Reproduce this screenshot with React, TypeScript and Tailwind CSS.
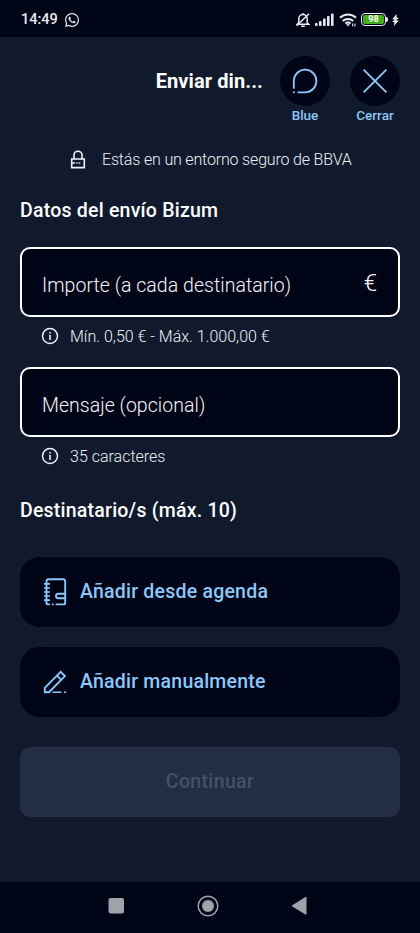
import type { ReactNode } from "react";
import { FaWhatsapp } from "react-icons/fa";

function StatusBar() {
  return (
    <div className="h-[37px] bg-[#000417] flex items-center justify-between pl-[21px] pr-[21px] pt-[2px] text-[#e8eaf0]">
      <div className="flex items-center gap-[6px]">
        <span className="w-[37px] pt-[2px] text-[14.5px] font-medium leading-none whitespace-nowrap">14:49</span>
        <FaWhatsapp className="w-[16px] h-[16px]" />
      </div>
      <div className="flex items-center">
        <svg width="14" height="16" viewBox="0 0 14 16" fill="none" stroke="currentColor" strokeWidth="1.5">
          <path d="M2.8 10.5V6.8a4.2 4.2 0 0 1 8.4 0v3.9l1.6 1.6H1.2zM7 1v1.6" />
          <path d="M5.2 14.2h3.6M.7 13.7 13 1.7" />
        </svg>
        <svg className="ml-[5px]" width="19" height="13" viewBox="0 0 19 13" fill="currentColor">
          <rect x="0" y="10" width="2.6" height="3" rx=".8" />
          <rect x="4" y="8" width="2.6" height="5" rx=".8" />
          <rect x="8" y="5.5" width="2.6" height="7.5" rx=".8" />
          <rect x="12" y="3" width="2.6" height="10" rx=".8" />
          <rect x="16" y=".5" width="2.6" height="12.5" rx=".8" />
        </svg>
        <svg className="ml-[5px]" width="19" height="14" viewBox="0 0 19 14" fill="none" stroke="currentColor" strokeWidth="2">
          <path d="M1 4.8a11.5 11.5 0 0 1 16 0M3.8 8a7.5 7.5 0 0 1 10.4 0M6.4 10.6a3.8 3.8 0 0 1 5.2 0" />
          <path d="m7 11.3 2 2.2 2-2.2z" fill="currentColor" stroke="none" />
          <path d="M13.7 10.5v3M16 10.5v3" strokeWidth="1.1" />
        </svg>
        <div className="ml-[3px] flex items-center">
          <div className="w-[25px] h-[13px] rounded-[4px] border-[1.5px] border-[#e8eaf0] p-px">
            <div className="h-full rounded-[2px] bg-[#46ad1c] flex items-center justify-center text-[9px] leading-none font-bold text-white">
              98
            </div>
          </div>
          <div className="w-[2px] h-[5px] rounded-r bg-[#e8eaf0]" />
        </div>
        <svg className="ml-[4px]" width="7" height="12" viewBox="0 0 7 12" fill="currentColor">
          <path d="M4.6 0 .3 5.2 3 5.8 0 7.8l2.4.5L1.8 12 6.7 6.8 4.1 6 7 4.1 4.6 3.5z" />
        </svg>
      </div>
    </div>
  );
}

function HeaderButton({ label, children }: { label: string; children: ReactNode }) {
  return (
    <button className="w-[50px] flex flex-col items-center text-[#8bc8fb]">
      <span className="w-[50px] h-[50px] rounded-full bg-[#000417] flex items-center justify-center">{children}</span>
      <span className="text-[13.5px] leading-[18px] font-medium">{label}</span>
    </button>
  );
}

function InfoIcon() {
  return (
    <svg width="18" height="18" viewBox="0 0 18 18" fill="none" stroke="#f0f2f7" strokeWidth="1.5">
      <circle cx="9" cy="9" r="7.5" />
      <path d="M9 7.7v5.2M9 5v1.5" strokeWidth="1.6" />
    </svg>
  );
}

function Field({ label, suffix }: { label: string; suffix?: string }) {
  return (
    <div className="h-[70px] rounded-[10px] border-2 border-white bg-[#000417] flex items-center justify-between pl-[20px] pr-[21px] pt-[8px] font-light text-[#f4f5f9]">
      <span className="text-[19.5px] leading-6 tracking-[0.04px]">{label}</span>
      {suffix && <span className="text-[24px] leading-6 -mt-[6px]">{suffix}</span>}
    </div>
  );
}

function Hint({ children }: { children: ReactNode }) {
  return (
    <div className="h-[38px] flex items-center gap-[11px] pl-[21px] text-[16px] font-light text-[#eef0f5]">
      <InfoIcon />
      <span className="pt-px">{children}</span>
    </div>
  );
}

function ActionButton({ label, icon }: { label: string; icon: ReactNode }) {
  return (
    <button className="h-[70px] w-full rounded-[20px] bg-[#000417] flex items-center gap-[12px] pl-[22px] text-[#8bc8fb]">
      {icon}
      <span className="text-[19.5px] font-medium tracking-[0.22px]">{label}</span>
    </button>
  );
}

const agendaIcon = (
  <svg width="26" height="30" viewBox="0 0 26 30" fill="none" stroke="currentColor" strokeWidth="1.9">
    <path d="M7.8 27.4H6.2a1.7 1.7 0 0 1-1.7-1.7V4a1.7 1.7 0 0 1 1.7-1.7h15.3A1.7 1.7 0 0 1 23.2 4v21.7a1.7 1.7 0 0 1-1.7 1.7h-7.8" />
    <path d="M2 6.8h6M2 11h6M2 15h6M2 19h6M2 23.2h6M9.8 27.4h1.8" strokeWidth="1.7" />
    <path d="M23 16.8h-6.8a2.2 2.2 0 0 0 0 4.4H23" />
  </svg>
);

const pencilIcon = (
  <svg width="26" height="30" viewBox="0 0 26 30" fill="none" stroke="currentColor" strokeWidth="1.9">
    <path d="M2.8 25.2v-4.4L18.7 4.9l4.2 4.2L7 25.2zM15 8.6l4.2 4.2" />
    <path d="M10.5 25.3h9M22 25.3h2" strokeWidth="1.6" />
  </svg>
);

export default function App() {
  return (
    <div className="w-[420px] h-[933px] bg-[#111a2c] flex flex-col overflow-hidden font-[Roboto,'Liberation_Sans',sans-serif]">
      <StatusBar />
      <main className="flex-1 px-5 flex flex-col">
        <header className="h-[102px] pt-[19px] flex justify-end items-start gap-[20px]">
          <h1 className="pt-[11px] -mr-[3px] text-[20px] leading-7 font-bold tracking-[0.1px] text-white">Enviar din...</h1>
          <HeaderButton label="Blue">
            <svg width="26" height="26" viewBox="0 0 26 26" fill="none" stroke="currentColor" strokeWidth="1.8">
              <path d="M1.8 20.8V13a11.3 11.3 0 1 1 11.3 11.3H5.6" />
              <path d="M.9 24.3h1.9" />
            </svg>
          </HeaderButton>
          <HeaderButton label="Cerrar">
            <svg width="26" height="26" viewBox="0 0 26 26" fill="none" stroke="currentColor" strokeWidth="1.8">
              <path d="m1.6 1.6 22.8 22.8M24.4 1.6 1.6 24.4" />
            </svg>
          </HeaderButton>
        </header>

        <div className="h-[42px] flex items-center pl-[50px] gap-[16px]">
          <svg width="16" height="20" viewBox="0 0 16 20" fill="none" stroke="#f0f2f7" strokeWidth="1.6">
            <path d="M1.7 9h12.6v8.6H1.7zM4 9V5.2a4 4 0 0 1 8 0V9" />
            <path d="M2 13h3M6.2 13h1.4M8.8 13h1.4" />
          </svg>
          <span className="text-[16px] font-light tracking-[-0.17px] text-[#eef0f5]">Estás en un entorno seguro de BBVA</span>
        </div>

        <h2 className="h-[66px] pt-[16px] text-[19.5px] leading-7 font-medium tracking-[0.22px] text-white">Datos del envío Bizum</h2>
        <Field label="Importe (a cada destinatario)" suffix="€" />
        <Hint>Mín. 0,50 € - Máx. 1.000,00 €</Hint>
        <div className="h-[12px]" />
        <Field label="Mensaje (opcional)" />
        <Hint>35 caracteres</Hint>

        <h2 className="h-[82px] pt-[22px] text-[19.5px] leading-7 font-medium tracking-[0.22px] text-white">Destinatario/s (máx. 10)</h2>
        <div className="flex flex-col gap-[20px]">
          <ActionButton label="Añadir desde agenda" icon={agendaIcon} />
          <ActionButton label="Añadir manualmente" icon={pencilIcon} />
        </div>
        <button className="mt-[30px] h-[70px] rounded-[10px] bg-[#232d43] text-[19.5px] font-medium tracking-[0.35px] text-[#465169]" disabled>
          Continuar
        </button>
      </main>

      <nav className="h-[51px] bg-[#000417] flex items-center pb-[3px] pl-[108px] text-[#a0a2aa]">
        <svg width="16" height="24" viewBox="0 0 16 24" fill="currentColor">
          <rect x=".5" y="4" width="15.5" height="15.5" rx="2" />
        </svg>
        <svg className="ml-[72px]" width="24" height="24" viewBox="0 0 24 24">
          <circle cx="12" cy="12" r="9.8" fill="none" stroke="currentColor" strokeWidth="1.5" />
          <circle cx="12" cy="12" r="6" fill="currentColor" />
        </svg>
        <svg className="ml-[71px]" width="18" height="24" viewBox="0 0 18 24" fill="currentColor">
          <path d="M1.3 11.2 14.4 3q1.1-.6 1.1.7v16q0 1.3-1.1.7L1.3 12.6q-1-.7 0-1.4z" />
        </svg>
      </nav>
    </div>
  );
}
